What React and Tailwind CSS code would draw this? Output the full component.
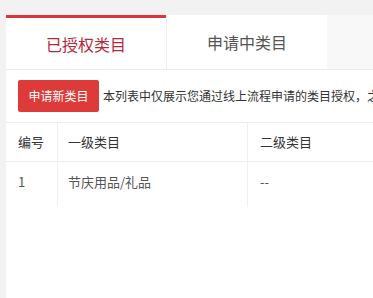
export default function App() {
  const font = { fontFamily: '"Noto Sans CJK SC", "Noto Sans", sans-serif' };
  return (
    <div className="w-[373px] h-[298px] bg-[#f2f2f2] overflow-hidden pt-[15px] pl-[6px]" style={font}>
      <div className="bg-white h-full w-[400px]">
        <div className="flex h-[55px] bg-[#f8f8f8] border-b border-[#ececec]">
          <div className="w-[160px] bg-white border-t-[3px] border-[#d8363b] flex items-center justify-center text-[16px] text-[#b3283a]">
            已授权类目
          </div>
          <div className="w-[161px] bg-white border-l border-[#eeeeee] flex items-center justify-center text-[16px] text-[#555555]">
            申请中类目
          </div>
        </div>
        <div className="flex items-center pt-[10px] pl-[12px]">
          <div className="h-[32px] w-[81px] bg-[#dd3a3a] rounded-[2px] text-white text-[12px] flex items-center justify-center shrink-0">
            申请新类目
          </div>
          <div className="ml-[4px] text-[12px] text-[#333333] whitespace-nowrap">
            本列表中仅展示您通过线上流程申请的类目授权，之前
          </div>
        </div>
        <div className="mt-[10px] border-t border-[#eeeeee]">
          <div className="flex h-[39px] border-b border-[#eeeeee] items-center text-[13px] text-[#333333]">
            <div className="w-[52px] pl-[12px] h-full flex items-center border-r border-[#f0f0f0]">编号</div>
            <div className="w-[190px] pl-[10px] h-full flex items-center border-r border-[#f0f0f0]">一级类目</div>
            <div className="pl-[12px] h-full flex items-center">二级类目</div>
          </div>
          <div className="flex h-[45px] text-[13px] text-[#555555]">
            <div className="w-[52px] pl-[12px] pt-[10px] h-full border-r border-[#f0f0f0]">1</div>
            <div className="w-[190px] pl-[10px] pt-[10px] h-full border-r border-[#f0f0f0]">节庆用品/礼品</div>
            <div className="pl-[12px] pt-[10px] h-full">--</div>
          </div>
        </div>
      </div>
    </div>
  );
}
